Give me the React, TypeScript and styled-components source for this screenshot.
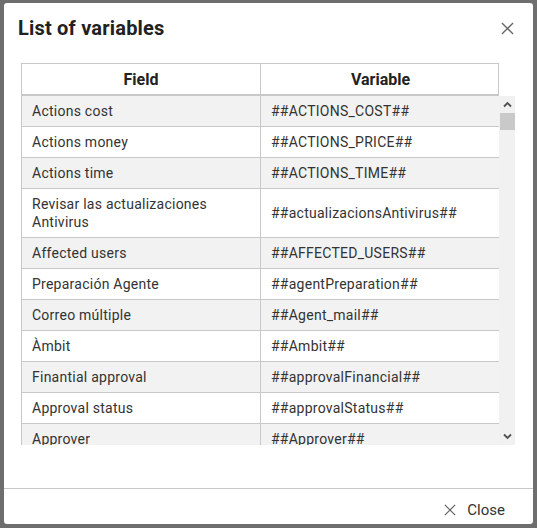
import styled, { createGlobalStyle } from "styled-components";

const GlobalStyle = createGlobalStyle`
    html, body {
        margin: 0;
        padding: 0;
        background: #6e6e6e;
    }
    body {
        font-family: Roboto, "Liberation Sans", sans-serif;
    }
`;

const Backdrop = styled.div`
    width: 537px;
    height: 528px;
    padding: 3px 4px 4px 4px;
    box-sizing: border-box;
`;

const Dialog = styled.div`
    width: 529px;
    height: 521px;
    background: #fff;
    border-radius: 3px;
    display: flex;
    flex-direction: column;
    box-sizing: border-box;
`;

const TitleBar = styled.div`
    display: flex;
    justify-content: space-between;
    align-items: flex-start;
    padding: 11px 18px 0 14px;
    height: 61px;
    box-sizing: border-box;
`;

const Title = styled.h2`
    margin: 0;
    font-size: 20px;
    line-height: 28px;
    font-weight: 700;
    color: #212121;
    letter-spacing: 0.2px;
`;

const IconButton = styled.button`
    border: none;
    background: transparent;
    padding: 0;
    margin-top: 6px;
    width: 16px;
    height: 16px;
    cursor: pointer;
    display: flex;
    align-items: center;
    justify-content: center;
`;

const Content = styled.div`
    padding: 0 0 0 17px;
    flex: 1;
`;

const HeaderRow = styled.div`
    display: grid;
    grid-template-columns: 239px 239px;
    width: 478px;
    border: 1px solid #c8c8c8;
    border-bottom: 2px solid #c8c8c8;
    box-sizing: border-box;
    height: 33px;
`;

const HeaderCell = styled.div<{ $last?: boolean }>`
    display: flex;
    align-items: center;
    justify-content: center;
    font-size: 16px;
    font-weight: 700;
    color: #222;
    border-right: ${(p) => (p.$last ? "none" : "1px solid #c8c8c8")};
`;

const BodyWrap = styled.div`
    display: flex;
    width: 494px;
    height: 349px;
`;

const RowList = styled.div`
    width: 478px;
    height: 100%;
    overflow: hidden;
`;

const Scrollbar = styled.div`
    width: 16px;
    height: 100%;
    background: #f1f1f1;
    display: flex;
    flex-direction: column;
    align-items: center;
    padding-left: 1px;
    box-sizing: border-box;
`;

const ScrollButton = styled.div`
    width: 15px;
    height: 17px;
    display: flex;
    align-items: center;
    justify-content: center;
`;

const Thumb = styled.div`
    width: 15px;
    height: 17px;
    background: #c9c9c9;
`;

const Track = styled.div`
    flex: 1;
`;

const Row = styled.div<{ $odd: boolean }>`
    display: grid;
    grid-template-columns: 239px 239px;
    width: 478px;
    background: ${(p) => (p.$odd ? "#f2f2f2" : "#fff")};
    border-left: 1px solid #c8c8c8;
    border-bottom: 1px solid #c8c8c8;
    box-sizing: border-box;
`;

const Cell = styled.div`
    padding: 6px 10px;
    font-size: 14px;
    line-height: 18px;
    color: #333;
    display: flex;
    align-items: center;
    border-right: 1px solid #c8c8c8;
    letter-spacing: 0.25px;
`;

const Spacer = styled.div`
    height: 43px;
`;

const Footer = styled.div`
    border-top: 1px solid #c8c8c8;
    height: 36px;
    display: flex;
    justify-content: flex-end;
    align-items: center;
    padding: 6px 28px 0 0;
    box-sizing: border-box;
`;

const CloseButton = styled.button`
    border: none;
    background: transparent;
    display: flex;
    align-items: center;
    gap: 11px;
    font-family: Roboto, "Liberation Sans", sans-serif;
    font-size: 15px;
    color: #333;
    padding: 0;
    cursor: pointer;
`;

interface IVar {
    field: string;
    variable: string;
}

const variables: IVar[] = [
    { field: "Actions cost", variable: "##ACTIONS_COST##" },
    { field: "Actions money", variable: "##ACTIONS_PRICE##" },
    { field: "Actions time", variable: "##ACTIONS_TIME##" },
    { field: "Revisar las actualizaciones Antivirus", variable: "##actualizacionsAntivirus##" },
    { field: "Affected users", variable: "##AFFECTED_USERS##" },
    { field: "Preparación Agente", variable: "##agentPreparation##" },
    { field: "Correo múltiple", variable: "##Agent_mail##" },
    { field: "Àmbit", variable: "##Ambit##" },
    { field: "Finantial approval", variable: "##approvalFinancial##" },
    { field: "Approval status", variable: "##approvalStatus##" },
    { field: "Approver", variable: "##Approver##" },
];

function CloseIcon({ size, color }: { size: number; color: string }) {
    return (
        <svg width={size} height={size} viewBox="0 0 14 14">
            <path d="M1 1 L13 13 M13 1 L1 13" stroke={color} strokeWidth="1.4" fill="none" />
        </svg>
    );
}

function Chevron({ up }: { up?: boolean }) {
    return (
        <svg width="9" height="7" viewBox="0 0 9 7">
            <path
                d={up ? "M1 5.5 L4.5 2 L8 5.5" : "M1 1.5 L4.5 5 L8 1.5"}
                stroke="#505050"
                strokeWidth="1.8"
                fill="none"
            />
        </svg>
    );
}

function App() {
    return (
        <>
            <GlobalStyle />
            <Backdrop>
                <Dialog>
                    <TitleBar>
                        <Title>List of variables</Title>
                        <IconButton>
                            <CloseIcon size={13} color="#666" />
                        </IconButton>
                    </TitleBar>
                    <Content>
                        <HeaderRow>
                            <HeaderCell>Field</HeaderCell>
                            <HeaderCell $last>Variable</HeaderCell>
                        </HeaderRow>
                        <BodyWrap>
                            <RowList>
                                {variables.map((v, i) => (
                                    <Row key={v.variable} $odd={i % 2 === 0}>
                                        <Cell>{v.field}</Cell>
                                        <Cell>{v.variable}</Cell>
                                    </Row>
                                ))}
                            </RowList>
                            <Scrollbar>
                                <ScrollButton>
                                    <Chevron up />
                                </ScrollButton>
                                <Thumb />
                                <Track />
                                <ScrollButton>
                                    <Chevron />
                                </ScrollButton>
                            </Scrollbar>
                        </BodyWrap>
                        <Spacer />
                    </Content>
                    <Footer>
                        <CloseButton>
                            <CloseIcon size={12} color="#666" />
                            Close
                        </CloseButton>
                    </Footer>
                </Dialog>
            </Backdrop>
        </>
    );
}

export default App;
